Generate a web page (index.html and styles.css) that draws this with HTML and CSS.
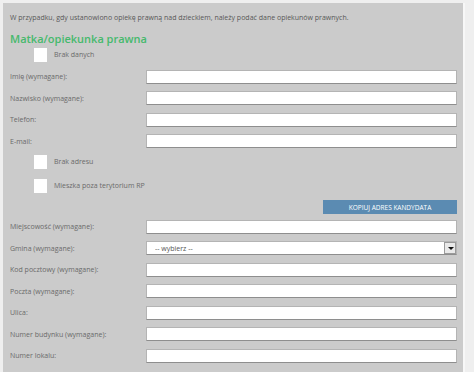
FILE: index.html
```html
<!DOCTYPE html>
<html lang="pl">
<head>
    <meta charset="UTF-8">
    <meta name="viewport" content="width=device-width, initial-scale=1.0">
    <title>Opiekun prawny</title>
    <link rel="stylesheet" href="styles.css">
</head>
<body>
    <div class="panel">
        <p class="intro">W przypadku, gdy ustanowiono opiekę prawną nad dzieckiem, należy podać dane opiekunów prawnych.</p>
        <h2>Matka/opiekunka prawna</h2>

        <label class="check check-first"><input type="checkbox"><span>Brak danych</span></label>

        <div class="row"><label for="imie">Imię (wymagane):</label><input type="text" id="imie"></div>
        <div class="row"><label for="nazwisko">Nazwisko (wymagane):</label><input type="text" id="nazwisko"></div>
        <div class="row"><label for="telefon">Telefon:</label><input type="text" id="telefon"></div>
        <div class="row"><label for="email">E-mail:</label><input type="text" id="email"></div>

        <label class="check check-addr"><input type="checkbox"><span>Brak adresu</span></label>
        <label class="check check-abroad"><input type="checkbox"><span>Mieszka poza terytorium RP</span></label>

        <div class="actions"><button type="button">Kopiuj adres kandydata</button></div>

        <div class="row"><label for="miejscowosc">Miejscowość (wymagane):</label><input type="text" id="miejscowosc"></div>
        <div class="row">
            <label for="gmina">Gmina (wymagane):</label>
            <div class="select-wrap">
                <select id="gmina">
                    <option value="">-- wybierz --</option>
                </select>
                <span class="arrow"></span>
            </div>
        </div>
        <div class="row"><label for="kod">Kod pocztowy (wymagane):</label><input type="text" id="kod"></div>
        <div class="row"><label for="poczta">Poczta (wymagane):</label><input type="text" id="poczta"></div>
        <div class="row"><label for="ulica">Ulica:</label><input type="text" id="ulica"></div>
        <div class="row"><label for="budynek">Numer budynku (wymagane):</label><input type="text" id="budynek"></div>
        <div class="row"><label for="lokal">Numer lokalu:</label><input type="text" id="lokal"></div>
    </div>
</body>
</html>
```

FILE: styles.css
```css
body {
    margin: 0;
    height: 372px;
    background: #efefef;
    font-family: "Open Sans", Arial, sans-serif;
    font-size: 7px;
    color: #6a6a6a;
    overflow: hidden;
}
.panel {
    margin: 3px 9px 0 3px;
    padding: 10px 6px 20px 7px;
    background: #cbcbcb;
    border-right: 2px solid #f7f7f7;
}
.intro {
    margin: 0;
    color: #585858;
    line-height: 10px;
}
h2 {
    margin: 9px 0 0;
    font-size: 11px;
    line-height: 13px;
    font-weight: 600;
    color: #45b96c;
}
.check {
    display: flex;
    align-items: flex-start;
    margin-left: 24px;
}
.check input {
    appearance: none;
    margin: 0;
    width: 13px;
    height: 14px;
    background: #fff;
    border: none;
}
.check span {
    margin: 2px 0 0 7px;
    line-height: 9px;
}
.check-first {
    margin-top: 3px;
    margin-bottom: 4px;
}
.check-addr {
    margin-top: 3px;
}
.check-abroad {
    margin-top: 10px;
}
.row {
    display: flex;
    align-items: center;
    height: 21.5px;
}
.row label {
    width: 136px;
    flex: none;
}
.row input,
.select-wrap {
    flex: 1;
    height: 14px;
    box-sizing: border-box;
    margin: 0;
    border: 1px solid #b4b4b4;
    border-bottom-color: #8e8e8e;
    background: #fff;
}
.select-wrap {
    position: relative;
    display: flex;
}
.select-wrap select {
    appearance: none;
    width: 100%;
    border: none;
    background: transparent;
    font: inherit;
    color: #555;
    padding: 0 0 0 8px;
}
.arrow {
    position: absolute;
    right: 0;
    top: 0;
    width: 12px;
    height: 12px;
    box-sizing: border-box;
    background: #e9e9e9;
    border: 1px solid #9a9a9a;
}
.arrow::after {
    content: "";
    position: absolute;
    left: 3px;
    top: 4px;
    border-left: 3px solid transparent;
    border-right: 3px solid transparent;
    border-top: 3px solid #111;
}
.actions {
    display: flex;
    justify-content: flex-end;
    margin: 7px 0 2px;
}
button {
    width: 134px;
    height: 14px;
    padding: 0;
    border: none;
    background: #5b8bb2;
    color: #fff;
    font: inherit;
    font-size: 6.5px;
    text-transform: uppercase;
}
```
